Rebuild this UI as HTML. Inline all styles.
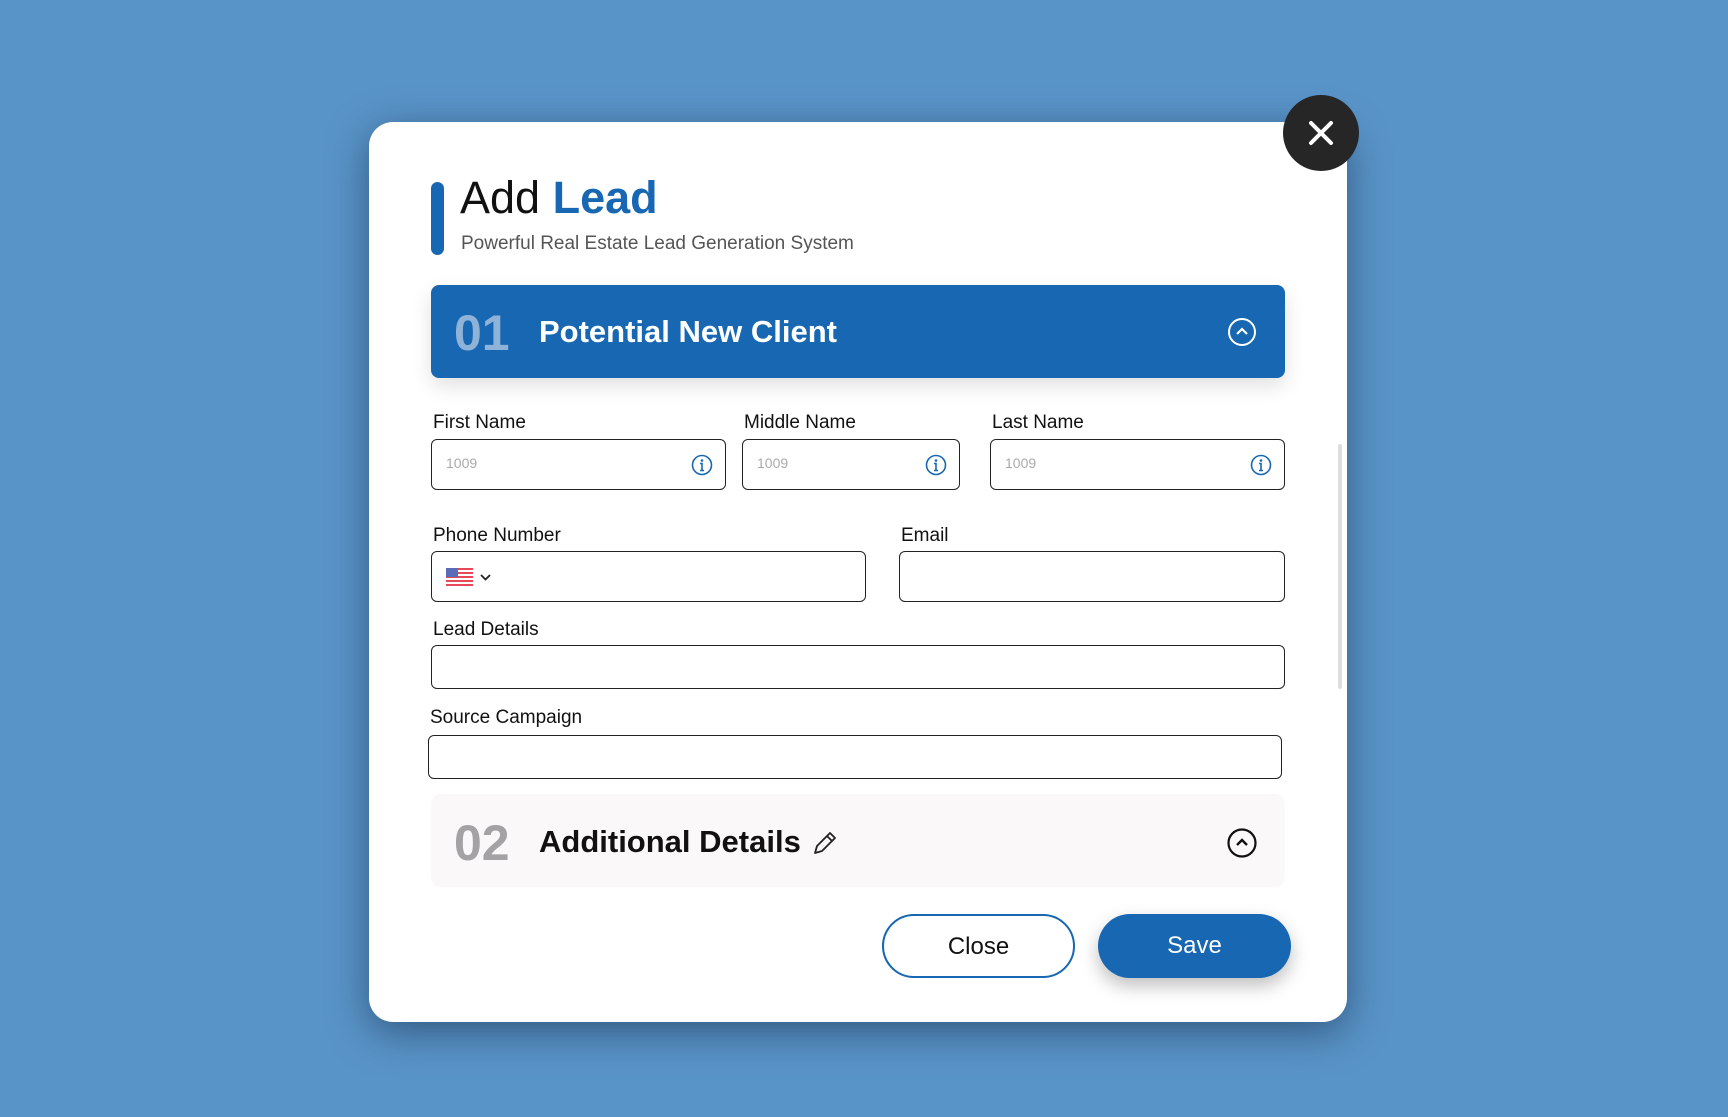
<!DOCTYPE html>
<html><head><meta charset="utf-8"><style>
*{box-sizing:border-box;margin:0;padding:0}
body{width:1728px;height:1117px;background:#5994c8;font-family:"Liberation Sans",sans-serif;position:relative;overflow:hidden}
.modal{position:absolute;left:369px;top:122px;width:978px;height:900px;background:#fff;border-radius:24px;box-shadow:0 10px 40px rgba(20,40,70,.55)}
.abs{position:absolute}
.x{left:1283px;top:95px;width:76px;height:76px;border-radius:50%;background:#262626}
.lbl{position:absolute;font-size:19px;color:#111;}
.inp{position:absolute;border:1.5px solid #222;border-radius:6px;background:#fff}
.ph{position:absolute;left:14px;top:15px;font-size:14px;color:#aaa}
.info{position:absolute;right:12px;top:14px}
.btn{position:absolute;top:914px;height:64px;width:193px;border-radius:32px;font-size:24px;text-align:center;line-height:62px}
</style></head><body>
<div class="modal"></div>
<div class="abs x"><svg width="76" height="76"><path d="M28 28L48 48M48 28L28 48" stroke="#fff" stroke-width="4" stroke-linecap="round"/></svg></div>
<div class="abs" style="left:431px;top:182px;width:13px;height:73px;background:#1767b2;border-radius:7px"></div>
<div class="abs" style="left:460px;top:172px;font-size:45px;color:#111">Add <b style="color:#1767b2">Lead</b></div>
<div class="abs" style="left:461px;top:233px;font-size:19px;color:#555">Powerful Real Estate Lead Generation System</div>
<div class="abs" style="left:431px;top:285px;width:854px;height:93px;background:#1767b2;border-radius:8px;box-shadow:0 8px 20px rgba(0,0,0,.12)"></div>
<div class="abs" style="left:454px;top:304px;font-size:50px;font-weight:bold;color:#8fb3d8">01</div>
<div class="abs" style="left:539px;top:314px;font-size:31px;font-weight:bold;color:#fff">Potential New Client</div>
<svg class="abs" style="left:1227px;top:317px" width="30" height="30"><circle cx="15" cy="15" r="13" fill="none" stroke="#fff" stroke-width="2"/><path d="M10 17L15 12L20 17" fill="none" stroke="#fff" stroke-width="2.2"/></svg>

<div class="lbl" style="left:433px;top:412px">First Name</div>
<div class="lbl" style="left:744px;top:412px">Middle Name</div>
<div class="lbl" style="left:992px;top:412px">Last Name</div>
<div class="inp" style="left:431px;top:439px;width:295px;height:51px"><span class="ph">1009</span><svg class="info" width="22" height="22"><circle cx="11" cy="11" r="9.5" fill="none" stroke="#1767b2" stroke-width="1.6"/><circle cx="11" cy="6.5" r="1.3" fill="#1767b2"/><path d="M9 9.5h2v7M9 16.5h4" stroke="#1767b2" stroke-width="1.6" fill="none"/></svg></div>
<div class="inp" style="left:742px;top:439px;width:218px;height:51px"><span class="ph">1009</span><svg class="info" width="22" height="22"><circle cx="11" cy="11" r="9.5" fill="none" stroke="#1767b2" stroke-width="1.6"/><circle cx="11" cy="6.5" r="1.3" fill="#1767b2"/><path d="M9 9.5h2v7M9 16.5h4" stroke="#1767b2" stroke-width="1.6" fill="none"/></svg></div>
<div class="inp" style="left:990px;top:439px;width:295px;height:51px"><span class="ph">1009</span><svg class="info" width="22" height="22"><circle cx="11" cy="11" r="9.5" fill="none" stroke="#1767b2" stroke-width="1.6"/><circle cx="11" cy="6.5" r="1.3" fill="#1767b2"/><path d="M9 9.5h2v7M9 16.5h4" stroke="#1767b2" stroke-width="1.6" fill="none"/></svg></div>

<div class="lbl" style="left:433px;top:525px">Phone Number</div>
<div class="lbl" style="left:901px;top:525px">Email</div>
<div class="inp" style="left:431px;top:551px;width:435px;height:51px"><svg class="abs" style="left:14px;top:15px" width="48" height="20"><rect x="0" y="1" width="27" height="18" fill="#fff"/><g fill="#e8495a"><rect y="1" width="27" height="2"/><rect y="5" width="27" height="2"/><rect y="9" width="27" height="2"/><rect y="13" width="27" height="2"/><rect y="17" width="27" height="2"/></g><rect x="0" y="1" width="12" height="9" fill="#5a6bb8"/><path d="M35 8l4.5 4.5L44 8" fill="none" stroke="#222" stroke-width="1.8"/></svg></div>
<div class="inp" style="left:899px;top:551px;width:386px;height:51px"></div>

<div class="lbl" style="left:433px;top:619px">Lead Details</div>
<div class="inp" style="left:431px;top:645px;width:854px;height:44px"></div>
<div class="lbl" style="left:430px;top:707px">Source Campaign</div>
<div class="inp" style="left:428px;top:735px;width:854px;height:44px"></div>

<div class="abs" style="left:431px;top:794px;width:854px;height:93px;background:#faf8f8;border-radius:10px"></div>
<div class="abs" style="left:454px;top:814px;font-size:50px;font-weight:bold;color:#a3a3a6">02</div>
<div class="abs" style="left:539px;top:824px;font-size:31px;font-weight:bold;color:#111">Additional Details</div>
<svg class="abs" style="left:810px;top:828px" width="30" height="30"><path d="M5 25l2-7L20 5l5 5L12 23z" fill="none" stroke="#222" stroke-width="1.8" stroke-linejoin="round"/><path d="M17 8l5 5" stroke="#222" stroke-width="1.8"/></svg>
<svg class="abs" style="left:1226px;top:827px" width="32" height="32"><circle cx="16" cy="16" r="13.5" fill="none" stroke="#111" stroke-width="2.2"/><path d="M11 18l5-5 5 5" fill="none" stroke="#111" stroke-width="2.4"/></svg>

<div class="btn" style="left:882px;border:2.5px solid #1767b2;color:#111;background:#fff">Close</div>
<div class="btn" style="left:1098px;background:#1767b2;color:#fff;line-height:64px;box-shadow:0 8px 18px rgba(0,0,0,.25)">Save</div>
<div class="abs" style="left:1338px;top:444px;width:4px;height:245px;background:#ddd;border-radius:2px"></div>
</body></html>
